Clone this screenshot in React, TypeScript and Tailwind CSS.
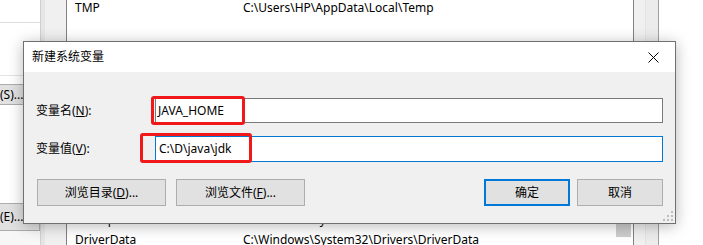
import React from "react";

const font = { fontFamily: '"Noto Sans", "Noto Sans CJK SC", sans-serif' };

function Grip() {
  const pts = [
    [8, 0],
    [4, 4],
    [8, 4],
    [0, 8],
    [4, 8],
    [8, 8],
  ];
  return (
    <svg width="10" height="10" viewBox="0 0 10 10" className="block">
      {pts.map(([x, y], i) => (
        <rect key={i} x={x} y={y} width="2" height="2" fill="#bdbdbd" />
      ))}
    </svg>
  );
}

function Btn({ children, primary, w }: { children: React.ReactNode; primary?: boolean; w: string }) {
  return (
    <div
      className={
        "h-[27px] flex items-center justify-center bg-[#e1e1e1] text-[12px] text-black " +
        w +
        (primary ? " border-2 border-[#0078d7]" : " border border-[#adadad]")
      }
    >
      {children}
    </div>
  );
}

export default function App() {
  return (
    <div className="relative w-[703px] h-[245px] overflow-hidden bg-white text-[12px] text-black" style={font}>
      {/* background window */}
      <div className="flex h-full">
        {/* left strip */}
        <div className="w-[40px] flex flex-col bg-white overflow-hidden">
          <div className="h-[22px]" />
          <div className="h-px bg-[#dcdcdc]" />
          <div className="h-[52px]" />
          <div className="h-px bg-[#e3e3e3]" />
          <div className="h-[8px]" />
          <div className="h-[21px] w-[60px] -ml-[2px] bg-[#e1e1e1] border border-[#adadad] flex items-center pl-[1px]">
            (S)...
          </div>
          <div className="h-[98px]" />
          <div className="h-[28px] -ml-[2px] w-[42px] bg-[#e1e1e1] border border-[#adadad] flex items-center pl-[1px]">
            (E)...
          </div>
          <div className="flex-1 bg-[#f7f7f7]" />
        </div>
        <div className="w-px bg-[#d0d0d0]" />
        <div className="w-[4px] bg-[#e6e6e6]" />
        <div className="w-[21px] bg-[#f0f0f0]" />
        <div className="w-px bg-[#828282]" />
        {/* list */}
        <div className="flex-1 flex bg-white">
          <div className="flex-1 flex flex-col relative overflow-hidden">
            <div className="h-[15px] flex items-center pl-[8px]">
              <span className="w-[168px]">TMP</span>
              <span>C:\Users\HP\AppData\Local\Temp</span>
            </div>
            <div className="flex-1" />
            <div className="h-[20px] shrink-0 flex items-center pl-[8px]">
              <span className="w-[168px]">ComSpec</span>
              <span>C:\Windows\system32\cmd.exe</span>
            </div>
            <div className="h-[20px] shrink-0 flex items-center pl-[8px] -mb-[5px]">
              <span className="w-[168px]">DriverData</span>
              <span>C:\Windows\System32\Drivers\DriverData</span>
            </div>
          </div>
          <div className="w-[17px] flex flex-col">
            <div className="h-[223px]" />
            <div className="h-[14px] w-[15px] bg-[#cdcdcd]" />
          </div>
        </div>
        <div className="w-px bg-[#828282]" />
        <div className="w-[11px] bg-[#f0f0f0]" />
        <div className="w-px bg-[#e3e3e3]" />
        <div className="w-[12px] bg-[#ececec]" />
        <div className="w-px bg-[#a0a0a0]" />
        <div className="w-[44px] bg-white" />
      </div>

      {/* dialog */}
      <div className="absolute left-[23px] top-[41px] w-[653px] h-[183px] border border-[#707070] bg-[#f0f0f0] flex flex-col shadow-[0_2px_14px_rgba(0,0,0,0.28)]">
        <div className="h-[30px] bg-white flex items-center justify-between pl-[8px]">
          <span className="-mt-[1px]">新建系统变量</span>
          <div className="w-[46px] h-full flex items-center justify-center">
            <svg width="11" height="11" viewBox="0 0 11 11" className="ml-[3px]">
              <path d="M0.5 0.5 L10.5 10.5 M10.5 0.5 L0.5 10.5" stroke="#000" strokeWidth="1" />
            </svg>
          </div>
        </div>
        <div className="flex-1 flex flex-col pt-[26px] pl-[12px] pr-[12px] relative">
          <div className="flex items-center h-[25px]">
            <span className="w-[119px]">
              变量名(<span className="underline">N</span>):
            </span>
            <div className="flex-1 h-[25px] bg-white border border-[#7a7a7a] flex items-center pl-[2px]">
              JAVA_HOME
            </div>
          </div>
          <div className="flex items-center h-[26px] mt-[13px]">
            <span className="w-[119px]">
              变量值(<span className="underline">V</span>):
            </span>
            <div className="flex-1 h-[26px] bg-white border border-[#0078d7] flex items-center pl-[3px]">
              C:\D\java\jdk
            </div>
          </div>
          <div className="flex items-center mt-[17px] pl-[1px]">
            <div className="flex gap-[10px]">
              <Btn w="w-[129px]">
                浏览目录(<span className="underline">D</span>)...
              </Btn>
              <Btn w="w-[129px]">
                浏览文件(<span className="underline">F</span>)...
              </Btn>
            </div>
            <div className="flex-1" />
            <div className="flex gap-[7px]">
              <Btn w="w-[86px]" primary>
                确定
              </Btn>
              <Btn w="w-[86px]">取消</Btn>
            </div>
          </div>
          <div className="absolute right-[2px] bottom-[2px]">
            <Grip />
          </div>
          {/* red highlight boxes */}
          <div className="absolute left-[127px] top-[24px] w-[94px] h-[29px] border-[3px] border-[#f01818] rounded-[3px]" />
          <div className="absolute left-[116px] top-[61px] w-[112px] h-[30px] border-[3px] border-[#f01818] rounded-[3px]" />
        </div>
      </div>
    </div>
  );
}
